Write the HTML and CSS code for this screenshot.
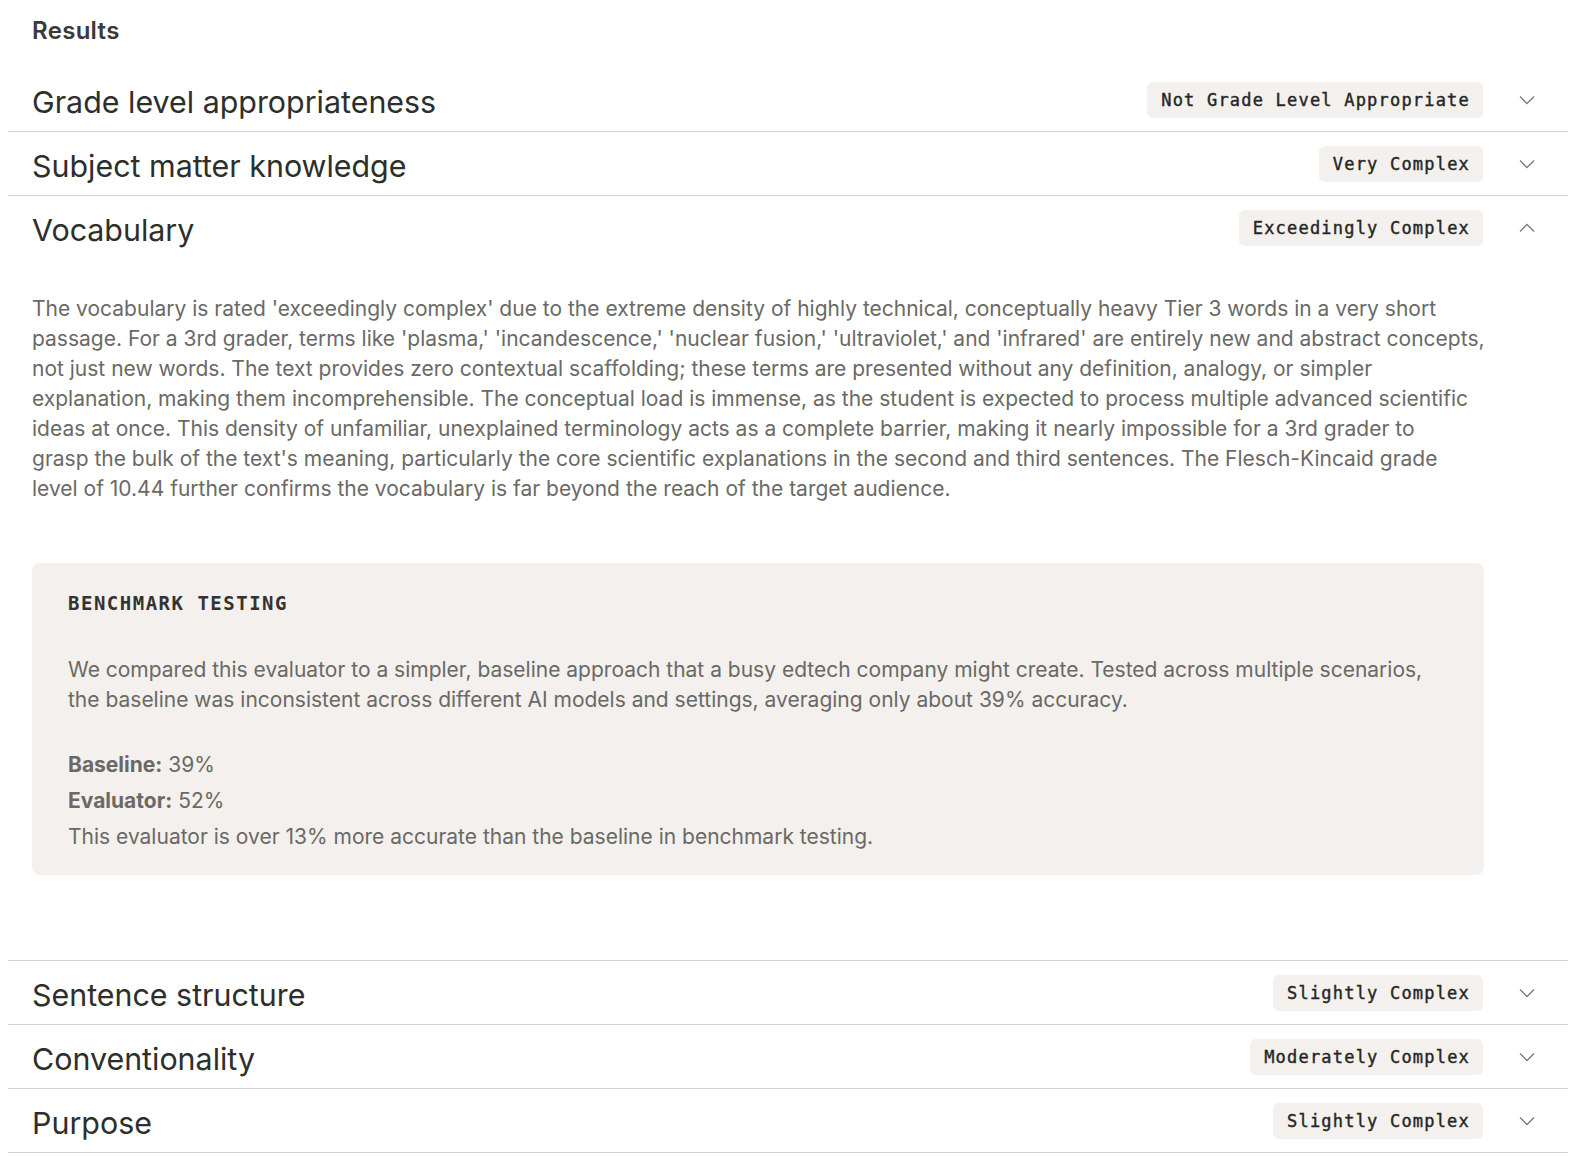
FILE: index.html
```html
<!DOCTYPE html>
<html lang="en">
<head>
  <meta charset="UTF-8">
  <meta name="viewport" content="width=device-width, initial-scale=1.0">
  <title>Results</title>
  <link rel="stylesheet" href="styles.css">
</head>
<body>
  <h3 class="results-title">Results</h3>
  <div class="accordion">
    <div class="item">
      <div class="row">
        <span class="row-title">Grade level appropriateness</span>
        <span class="badge">Not Grade Level Appropriate</span>
        <svg class="chev" width="16" height="10" viewBox="0 0 16 10"><polyline points="1,1.5 8,8.5 15,1.5"/></svg>
      </div>
    </div>
    <div class="item">
      <div class="row">
        <span class="row-title">Subject matter knowledge</span>
        <span class="badge">Very Complex</span>
        <svg class="chev" width="16" height="10" viewBox="0 0 16 10"><polyline points="1,1.5 8,8.5 15,1.5"/></svg>
      </div>
    </div>
    <div class="item open">
      <div class="row">
        <span class="row-title">Vocabulary</span>
        <span class="badge">Exceedingly Complex</span>
        <svg class="chev" width="16" height="10" viewBox="0 0 16 10"><polyline points="1,8.5 8,1.5 15,8.5"/></svg>
      </div>
      <div class="panel">
        <p class="explain">The vocabulary is rated 'exceedingly complex' due to the extreme density of highly technical, conceptually heavy Tier 3 words in a very short<br>
        passage. For a 3rd grader, terms like 'plasma,' 'incandescence,' 'nuclear fusion,' 'ultraviolet,' and 'infrared' are entirely new and abstract concepts,<br>
        not just new words. The text provides zero contextual scaffolding; these terms are presented without any definition, analogy, or simpler<br>
        explanation, making them incomprehensible. The conceptual load is immense, as the student is expected to process multiple advanced scientific<br>
        ideas at once. This density of unfamiliar, unexplained terminology acts as a complete barrier, making it nearly impossible for a 3rd grader to<br>
        grasp the bulk of the text's meaning, particularly the core scientific explanations in the second and third sentences. The Flesch-Kincaid grade<br>
        level of 10.44 further confirms the vocabulary is far beyond the reach of the target audience.</p>
        <div class="bench">
          <h4 class="bench-title">BENCHMARK TESTING</h4>
          <p class="bench-text">We compared this evaluator to a simpler, baseline approach that a busy edtech company might create. Tested across multiple scenarios, the baseline was inconsistent across different AI models and settings, averaging only about 39% accuracy.</p>
          <div class="stat"><b>Baseline:</b> 39%</div>
          <div class="stat"><b>Evaluator:</b> 52%</div>
          <div class="stat">This evaluator is over 13% more accurate than the baseline in benchmark testing.</div>
        </div>
      </div>
    </div>
    <div class="item">
      <div class="row">
        <span class="row-title">Sentence structure</span>
        <span class="badge">Slightly Complex</span>
        <svg class="chev" width="16" height="10" viewBox="0 0 16 10"><polyline points="1,1.5 8,8.5 15,1.5"/></svg>
      </div>
    </div>
    <div class="item">
      <div class="row">
        <span class="row-title">Conventionality</span>
        <span class="badge">Moderately Complex</span>
        <svg class="chev" width="16" height="10" viewBox="0 0 16 10"><polyline points="1,1.5 8,8.5 15,1.5"/></svg>
      </div>
    </div>
    <div class="item">
      <div class="row">
        <span class="row-title">Purpose</span>
        <span class="badge">Slightly Complex</span>
        <svg class="chev" width="16" height="10" viewBox="0 0 16 10"><polyline points="1,1.5 8,8.5 15,1.5"/></svg>
      </div>
    </div>
  </div>
</body>
</html>
```

FILE: styles.css
```css
body { margin: 8px; font-family: Inter, "Noto Sans", sans-serif; color: #2e2e2b; background: #fff; }
.results-title { margin: 0; padding: 9px 24px 0; font-size: 24px; line-height: 28px; font-weight: 600; letter-spacing: 0.3px; color: #3a3a37; }
.accordion { margin-top: 23px; }
.item { border-bottom: 1px solid #d5d2ce; }
.row { display: flex; align-items: center; height: 63px; padding: 0 33px 0 24px; }
.item.open .row { height: 64px; }
.row-title { flex: 1; padding-top: 4px; font-size: 30.4px; color: #2e2e2b; }
.badge { background: #f3f0ed; border-radius: 6px; height: 36px; line-height: 36px; padding: 0 13px 0 14px; font-family: "DejaVu Sans Mono", "Liberation Mono", monospace; font-size: 17px; letter-spacing: 1.2px; color: #262624; -webkit-text-stroke: 0.4px #262624; }
.chev { margin-left: 36px; fill: none; stroke: #7a7975; stroke-width: 1.3; }
.panel { padding: 34px 84px 85px 24px; }
.explain { margin: 0; font-size: 21px; line-height: 30px; color: #6a6965; white-space: nowrap; }
.bench { margin-top: 59px; background: #f3f0ed; border-radius: 8px; padding: 28px 36px 20px; }
.bench-title { margin: 0; font-family: "DejaVu Sans Mono", "Liberation Mono", monospace; font-size: 19px; line-height: 24px; letter-spacing: 1.5px; font-weight: bold; color: #333330; }
.bench-text { margin: 40px 0 32px; font-size: 21px; line-height: 30px; color: #6a6965; }
.stat { font-size: 21px; line-height: 36px; color: #6a6965; }
.stat b { font-weight: 700; }
```
